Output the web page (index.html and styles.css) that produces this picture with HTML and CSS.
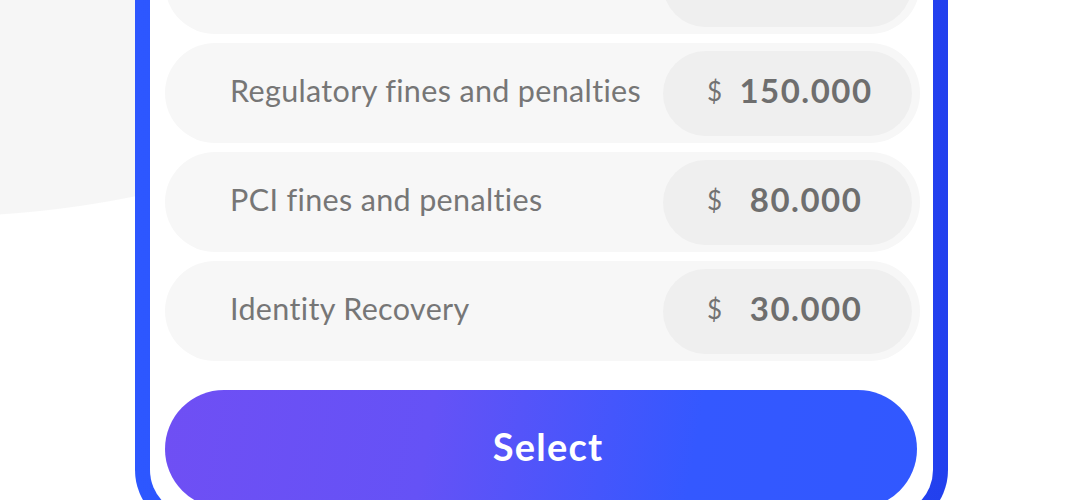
FILE: index.html
```html
<!DOCTYPE html>
<html>
<head>
<meta charset="utf-8">
<link rel="stylesheet" href="styles.css">
</head>
<body>
<div class="page">
  <div class="frame">
    <div class="row">
      <span class="label"></span>
      <div class="value"></div>
    </div>
    <div class="row">
      <span class="label">Regulatory fines and penalties</span>
      <div class="value"><span class="cur">$</span><span class="amt">150.000</span></div>
    </div>
    <div class="row">
      <span class="label">PCI fines and penalties</span>
      <div class="value"><span class="cur">$</span><span class="amt">80.000</span></div>
    </div>
    <div class="row">
      <span class="label">Identity Recovery</span>
      <div class="value"><span class="cur">$</span><span class="amt">30.000</span></div>
    </div>
    <button class="select">Select</button>
  </div>
</div>
</body>
</html>
```
FILE: styles.css
```css
html, body {
  margin: 0;
  padding: 0;
}
body {
  width: 1080px;
  height: 500px;
  overflow: hidden;
  background:
    radial-gradient(circle 1000px at -65px -783px, #f6f6f6 99.9%, rgba(246,246,246,0) 100%),
    #ffffff;
  font-family: Lato, "Open Sans", sans-serif;
}
.page {
  display: flex;
  padding-left: 135px;
}
.frame {
  box-sizing: border-box;
  width: 813px;
  margin-top: -96px;
  border: 15px solid transparent;
  border-radius: 60px;
  background:
    linear-gradient(#ffffff, #ffffff) padding-box,
    linear-gradient(90deg, #2d57ff 0%, #2a4cf6 50%, #2240ee 100%) border-box;
  padding: 15px 13px 7px 15px;
  display: flex;
  flex-direction: column;
  gap: 9px;
}
.row {
  height: 100px;
  border-radius: 50px;
  background: #f7f7f7;
  display: flex;
  align-items: center;
  justify-content: space-between;
  padding: 0 8px 0 65px;
  flex-shrink: 0;
}
.label {
  font-size: 30.5px;
  color: #767676;
  letter-spacing: 0.35px;
  margin-bottom: 7px;
}
.value {
  width: 249px;
  height: 85px;
  border-radius: 43px;
  background: #efefef;
  display: flex;
  align-items: center;
  padding: 0 0 7px 44px;
  box-sizing: border-box;
}
.cur {
  font-size: 26px;
  color: #727272;
  margin-top: 3px;
}
.amt {
  flex: 1;
  text-align: center;
  padding-right: 22px;
  font-size: 33px;
  font-weight: 700;
  color: #6e6e6e;
  letter-spacing: 1.5px;
}
.select {
  margin-top: 20px;
  width: 752px;
  height: 118px;
  border: none;
  border-radius: 59px;
  background: linear-gradient(100deg, #6f4ff4 0%, #6552f6 35%, #3458ff 70%, #3158ff 100%);
  color: #ffffff;
  font-family: Lato, "Open Sans", sans-serif;
  font-size: 38px;
  font-weight: 700;
  letter-spacing: 1.2px;
  padding: 0 0 6px 14px;
  flex-shrink: 0;
}
```
